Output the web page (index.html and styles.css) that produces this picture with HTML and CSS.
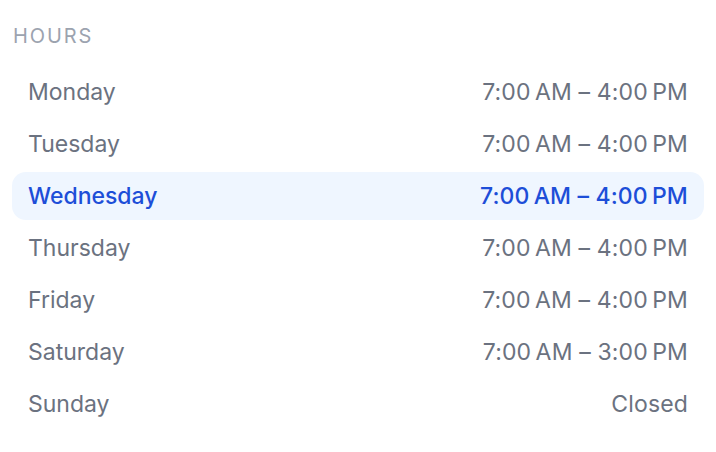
FILE: index.html
```html
<!DOCTYPE html>
<html>
<head>
<meta charset="utf-8">
<link rel="stylesheet" href="styles.css">
</head>
<body>
<section class="hours">
  <h2 class="title">HOURS</h2>
  <ul class="list">
    <li class="row"><span class="day">Monday</span><span class="time">7:00&#8239;AM – 4:00&#8239;PM</span></li>
    <li class="row"><span class="day">Tuesday</span><span class="time">7:00&#8239;AM – 4:00&#8239;PM</span></li>
    <li class="row today"><span class="day">Wednesday</span><span class="time">7:00&#8239;AM – 4:00&#8239;PM</span></li>
    <li class="row"><span class="day">Thursday</span><span class="time">7:00&#8239;AM – 4:00&#8239;PM</span></li>
    <li class="row"><span class="day">Friday</span><span class="time">7:00&#8239;AM – 4:00&#8239;PM</span></li>
    <li class="row"><span class="day">Saturday</span><span class="time">7:00&#8239;AM – 3:00&#8239;PM</span></li>
    <li class="row"><span class="day">Sunday</span><span class="time">Closed</span></li>
  </ul>
</section>
</body>
</html>
```
FILE: styles.css
```css
* { box-sizing: border-box; }
html, body { margin: 0; padding: 0; background: #ffffff; }
body { font-family: Inter, "Noto Sans", sans-serif; }
.hours { padding: 24px 12px 0 12px; }
.title {
  margin: 0 0 20px 1px;
  font-size: 20px;
  line-height: 24px;
  font-weight: 400;
  letter-spacing: 1.9px;
  color: #9ca3af;
}
.list { list-style: none; margin: 0; padding: 0; display: flex; flex-direction: column; gap: 4px; }
.row {
  display: flex;
  justify-content: space-between;
  align-items: center;
  height: 48px;
  padding: 0 16px;
  border-radius: 14px;
  font-size: 23px;
  color: #6b7280;
}
.time { letter-spacing: 0.15px; }
.today { background: #eff6ff; color: #1d4ed8; font-weight: 500; }
```
